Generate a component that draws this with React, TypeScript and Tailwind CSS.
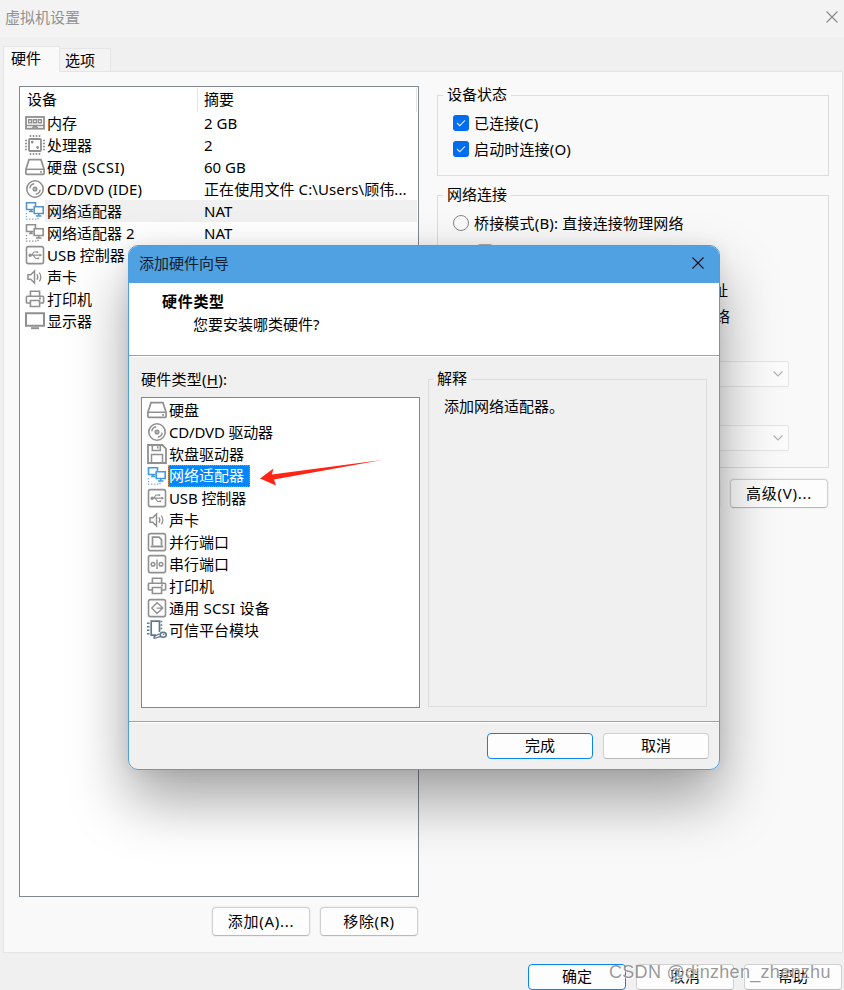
import React from "react";

const G = "#909090";

function Icon({ name }: { name: string }) {
  const blue = name === "netblue";
  const bright = name === "netbright";
  const netColor = blue ? "#5a93c0" : bright ? "#3d9bea" : G;
  return (
    <svg width="20" height="20" viewBox="0 0 20 20" fill="none" stroke={G} strokeWidth="1.4" className="block shrink-0">
      {name === "memory" && (
        <>
          <rect x="1" y="4" width="18" height="11.700" strokeWidth="1.8" />
          <path d="M1 12.500h18M7 15.500l1.500-1.500h3l1.500 1.500" />
          <path d="M3.600 6.700h3v3h-3zM8.500 6.700h3v3h-3zM13.400 6.700h3v3h-3z" strokeWidth="1.4" />
        </>
      )}
      {name === "cpu" && (
        <>
          <rect x="4" y="4" width="12" height="12" rx="1" strokeWidth="1.8" />
          <path d="M5.500 0v2M8.500 0v2M11.500 0v2M14.500 0v2M5.500 18v2M8.500 18v2M11.500 18v2M14.500 18v2M0 5.500h2M0 8.500h2M0 11.500h2M0 14.500h2M18 5.500h2M18 8.500h2M18 11.500h2M18 14.500h2" strokeWidth="1.500" />
          <circle cx="7.200" cy="7.200" r=".7" />
          <circle cx="12.600" cy="12.500" r=".7" />
        </>
      )}
      {name === "disk" && (
        <>
          <path d="M4 2.700h12l3.100 9.600v4.200c0 .6-.4.9-.9.9H1.800c-.5 0-.9-.3-.9-.9v-4.200z" strokeWidth="1.700" />
          <path d="M1 12.300h18" strokeWidth="1.500" />
          <path d="M15 14.900h2" strokeWidth="1.500" />
        </>
      )}
      {name === "cd" && (
        <>
          <circle cx="10" cy="10" r="8.200" strokeWidth="1.600" />
          <circle cx="10" cy="10" r="1.600" strokeWidth="1.900" />
          <path d="M4.800 9.300c.3-2.400 2-4.100 4.400-4.500M15.200 10.700c-.3 2.400-2 4.100-4.400 4.500" />
        </>
      )}
      {(name === "net" || blue || bright) && (
        <>
          <g stroke={netColor}>
            <path d="M10.500 5V1.700h-9v6.800h7M4 10.500h4M6 8.500v2" strokeWidth="1.600" />
            <path d="M9.200 5.700h9v6.800h-9zM13.700 12.500v2M11 15h5.500" strokeWidth="1.600" />
          </g>
          <path d="M1.500 12v1.200M1.500 15v1.200M1 18.200h1.400M4 18.200h1.400M7 18.200h1.400M10 18.200h1.400M13 16.700v1.500" stroke={blue || bright ? "#84aaca" : G} strokeWidth="1.300" />
        </>
      )}
      {name === "usb" && (
        <>
          <rect x="1.500" y="1.600" width="17" height="17" rx="1.800" strokeWidth="1.600" />
          <path d="M4.500 10.200h11.300M6.800 10l2.200-3h2.800M8.400 10.500l2.300 3h2.400" strokeWidth="1.200" />
          <circle cx="5.200" cy="10.200" r="1" fill={G} />
          <path d="M11.500 6.200h1.700v1.700h-1.700zM12.500 12.600h1.700v1.700h-1.700zM14.400 8.600l2.600 1.600-2.600 1.600z" fill={G} stroke="none" />
        </>
      )}
      {name === "sound" && (
        <>
          <path d="M3 7.700h2.700l3.800-3.700v12l-3.800-3.700H3z" strokeWidth="1.500" />
          <path d="M11.800 7.300c1.200 1.500 1.200 3.900 0 5.400M14.200 5.600c2.200 2.500 2.200 6.300 0 8.800" strokeWidth="1.300" />
        </>
      )}
      {name === "printer" && (
        <path d="M5.400 7V2.200h9.200V7M5.400 14H2.200c-.5 0-.8-.3-.8-.8V8c0-.5.3-.8.8-.8h15.600c.5 0 .8.3.8.8v5.200c0 .5-.3.8-.8.8h-3.200M5.400 11.500h9.200v6H5.400zM14 9.400h2" strokeWidth="1.600" />
      )}
      {name === "display" && (
        <>
          <path d="M1 2.300h18v12.500H1z" strokeWidth="2" />
          <path d="M6 17.200h8" strokeWidth="2" />
        </>
      )}
      {name === "floppy" && (
        <>
          <path d="M1 1h14.300l3.700 3.700V19H1z" strokeWidth="1.800" />
          <path d="M5.300 1v5.400h8V1M4.500 19v-8.400h11V19M10.800 2.300v2.200" strokeWidth="1.500" />
        </>
      )}
      {name === "parallel" && (
        <>
          <rect x="1.500" y="1.600" width="17" height="17" rx="1.800" strokeWidth="1.600" />
          <path d="M5.500 13.500V5.200h6.500l2.500 2.300v6" strokeWidth="1.700" />
          <path d="M3.700 14.500h12.600" strokeWidth="2.200" />
        </>
      )}
      {name === "serial" && (
        <>
          <rect x="1.500" y="1.600" width="17" height="17" rx="1.800" strokeWidth="1.600" />
          <circle cx="6" cy="10.200" r="1.800" strokeWidth="1.500" />
          <circle cx="14" cy="10.200" r="1.800" strokeWidth="1.500" />
          <path d="M10 5.500v9.400" />
        </>
      )}
      {name === "scsi" && (
        <>
          <rect x="1.500" y="1.600" width="17" height="17" rx="1.800" strokeWidth="1.600" />
          <path d="M13.200 7.500 10 4.700l-5.200 5.400 5.200 5.400 3.200-3M9.500 10.100h6.200M13.200 7.600l2.500 2.500-2.500 2.500" />
        </>
      )}
      {name === "tpm" && (
        <g stroke="#60778e">
          <path d="M9 15.200H4.200V1.200h8.300V12" strokeWidth="1.700" />
          <path d="M0 3.200h2.500M0 6.700h2.500M0 10.200h2.500M0 13.700h2.500M13.500 1.600h1.800M13.500 5h1.800M13.500 8.500h1.800" strokeWidth="1.500" />
          <ellipse cx="16.200" cy="14.800" rx="3" ry="2.500" strokeWidth="1.600" />
          <path d="m14 16.300-7 2.200M12.500 13.700l-5.500 3M7 16.500v2.200" strokeWidth="1.300" />
          <path d="M15.800 14.200h1.400" strokeWidth="1.400" />
        </g>
      )}
    </svg>
  );
}

const devices = [
  ["memory", "内存", "2 GB", ""],
  ["cpu", "处理器", "2", ""],
  ["disk", "硬盘 (SCSI)", "60 GB", "tracking-[0.45px]"],
  ["cd", "CD/DVD (IDE)", "正在使用文件 C:\\Users\\顾伟...", "tracking-[0.08px]"],
  ["netblue", "网络适配器", "NAT", ""],
  ["net", "网络适配器 2", "NAT", ""],
  ["usb", "USB 控制器", "", ""],
  ["sound", "声卡", "", ""],
  ["printer", "打印机", "", ""],
  ["display", "显示器", "", ""],
];

const hardware = [
  ["disk", "硬盘", ""],
  ["cd", "CD/DVD 驱动器", "tracking-[-0.18px]"],
  ["floppy", "软盘驱动器", ""],
  ["netbright", "网络适配器", ""],
  ["usb", "USB 控制器", "tracking-[-0.1px]"],
  ["sound", "声卡", ""],
  ["parallel", "并行端口", ""],
  ["serial", "串行端口", ""],
  ["printer", "打印机", ""],
  ["scsi", "通用 SCSI 设备", "tracking-[0.2px]"],
  ["tpm", "可信平台模块", ""],
];

function Button({ children, className = "", primary = false }: { children: React.ReactNode; className?: string; primary?: boolean }) {
  return (
    <button
      className={`flex shrink-0 items-center justify-center rounded-[4px] border bg-[#fdfdfd] pb-[2px] ${
        primary ? "border-[#0a84f0]" : "border-[#d0d0d0] border-b-[#b9b9b9]"
      } ${className}`}
    >
      {children}
    </button>
  );
}

function Cross({ size, color }: { size: number; color: string }) {
  return (
    <svg width={size} height={size} viewBox="0 0 12 12" stroke={color} strokeWidth="1.1" className="block">
      <path d="M.5.5l11 11M11.5.5l-11 11" />
    </svg>
  );
}

function Check({ label }: { label: string }) {
  return (
    <div className="flex h-[26px] items-center tracking-[0.15px]">
      <span className="mr-[5px] flex size-4 items-center justify-center rounded-[3px] bg-[#006cf0]">
        <svg width="10" height="10" viewBox="0 0 10 10" fill="none" stroke="#d9e9ff" strokeWidth="1.1">
          <path d="M1 5l2.8 2.7L9 2.4" />
        </svg>
      </span>
      {label}
    </div>
  );
}

function Radio({ label }: { label: string }) {
  return (
    <div className="flex h-[26px] items-center whitespace-nowrap tracking-[0.18px]">
      <span className="mr-[5px] size-4 rounded-full border border-[#868686] bg-[#fafafa]" />
      {label}
    </div>
  );
}

function Combo() {
  return (
    <div className="flex h-[26px] w-[290px] items-center justify-end rounded-[2px] border border-[#e5e5e5] bg-[#fbfbfb] pr-[5px]">
      <svg width="10" height="6" viewBox="0 0 10 6" fill="none" stroke="#b0b0b0" strokeWidth="1.1">
        <path d="M.5.5L5 5 9.5.5" />
      </svg>
    </div>
  );
}

function Wizard() {
  return (
    <div className="absolute left-[128px] top-[245px] flex h-[525px] w-[592px] flex-col overflow-hidden rounded-[10px] border border-[#4f9fdf] bg-[#f0f0f0]">
      <header className="flex h-[37px] shrink-0 items-center justify-between bg-[#50a1e2] pb-[3px] pl-[10px] pr-[15px] text-[#10202e]">
        <span>添加硬件向导</span>
        <Cross size={12} color="#111" />
      </header>
      <div className="h-[73px] shrink-0 border-b border-[#a0a0a0] bg-white pt-[7px]">
        <div className="h-[23px] pl-[33px] font-bold leading-[23px] tracking-[0.7px]">硬件类型</div>
        <div className="h-[23px] pl-[64px] leading-[23px]">您要安装哪类硬件?</div>
      </div>
      <div className="flex h-[365px] shrink-0 border-t border-white pl-[12px]">
        <div className="w-[279px] pt-[11px]">
          <div className="h-[23px] leading-[22px] tracking-[0.25px]">
            硬件类型(<span className="underline underline-offset-2">H</span>):
          </div>
          <div className="mt-[6px] h-[311px] border border-[#828790] bg-white pl-[5px] pt-[1px]">
            {hardware.map(([icon, label, tracking]) => (
              <div key={label} className="flex h-[22px] items-center">
                <Icon name={icon} />
                {icon === "netbright" ? (
                  <span className="ml-px h-[22px] w-[82px] border border-dotted border-[#e08a45] bg-[#0087ff] leading-[19px] text-white">
                    {label}
                  </span>
                ) : (
                  <span className={`ml-[2px] leading-[22px] ${tracking}`}>{label}</span>
                )}
              </div>
            ))}
          </div>
        </div>
        <fieldset className="ml-[8px] mt-[11px] h-[339px] w-[279px] border border-[#dcdcdc]">
          <legend className="ml-[4px] h-[22px] px-[4px] leading-[21px]">解释</legend>
          <div className="pl-[15px] pt-[5px] leading-[22px]">添加网络适配器。</div>
        </fieldset>
      </div>
      <div className="flex h-[48px] shrink-0 items-start justify-end gap-[10px] border-t border-[#a0a0a0] pr-[10px] pt-[11px] shadow-[inset_0_1px_0_#fff]">
        <Button primary className="h-[26px] w-[106px]">完成</Button>
        <Button className="h-[26px] w-[106px]">取消</Button>
      </div>
    </div>
  );
}

export default function App() {
  return (
    <div className="relative flex h-[990px] w-[844px] flex-col overflow-hidden bg-[#f0f0f0] font-['Noto_Sans','Noto_Sans_CJK_SC',sans-serif] text-[15px] leading-[22px] text-black">
      <header className="flex h-[37px] shrink-0 items-center justify-between bg-[#f3f3f3] pb-[3px] pl-[5px] pr-[6px] text-[#929292]">
        <span>虚拟机设置</span>
        <Cross size={12} color="#888" />
      </header>
      <div className="flex h-[34px] shrink-0 items-end pl-[3px]">
        <div className="z-10 -mb-px h-[26px] w-[57px] border border-b-0 border-[#e5e5e5] bg-[#f9f9f9] pl-[7px] leading-[22px]">硬件</div>
        <div className="h-[23px] w-[51px] border border-b-0 border-l-0 border-[#e5e5e5] bg-[#f3f3f3] pl-[5px] leading-[22px]">选项</div>
      </div>
      <main className="ml-[3px] flex h-[882px] w-[840px] shrink-0 border border-[#e5e5e5] bg-[#f9f9f9] pl-[15px]">
        <section className="w-[400px] shrink-0 pt-[14px]">
          <div className="h-[811px] border border-[#828790] bg-white">
            <div className="flex h-[25px] pt-px">
              <div className="w-[178px] border-r border-[#e5e5e5] pl-[7px] leading-[23px]">设备</div>
              <div className="w-[219px] border-r border-[#e5e5e5] pl-[6px] leading-[23px]">摘要</div>
            </div>
            {devices.map(([icon, name, summary, tracking]) => (
              <div key={name} className="flex h-[22px] items-center whitespace-pre pl-[5px]">
                <Icon name={icon} />
                <div className={`flex h-[22px] w-[372px] items-center pl-[2px] ${icon === "netblue" ? "bg-[#f0f0f0]" : ""}`}>
                  <span className={`w-[157px] ${tracking}`}>{name}</span>
                  <span className={icon === "cd" ? "tracking-[0.1px]" : ""}>{summary}</span>
                </div>
              </div>
            ))}
          </div>
          <div className="mt-[10px] flex justify-end gap-[10px] pr-px">
            <Button className="h-[29px] w-[98px] tracking-[0.75px] shadow-[0_0_0_1px_#f0f0f0]">添加(A)...</Button>
            <Button className="h-[29px] w-[98px] tracking-[0.6px] shadow-[0_0_0_1px_#f0f0f0]">移除(R)</Button>
          </div>
        </section>
        <section className="ml-[18px] w-[392px] shrink-0 pt-[12px]">
          <fieldset className="h-[92px] border border-[#dcdcdc]">
            <legend className="ml-[5px] h-[22px] px-[4px] leading-[21px]">设备状态</legend>
            <div className="pl-[15px] pt-[4px]">
              <Check label="已连接(C)" />
              <Check label="启动时连接(O)" />
            </div>
          </fieldset>
          <fieldset className="mt-[8px] h-[284px] border border-[#dcdcdc]">
            <legend className="ml-[5px] h-[22px] px-[4px] leading-[21px]">网络连接</legend>
            <div className="pl-[15px] pt-[4px]">
              <Radio label="桥接模式(B): 直接连接物理网络" />
              <div className="flex h-[41px] items-start pl-[24px] pt-[8px]">
                <span className="mr-[5px] size-4 rounded-[3px] border border-[#aaa]" />
                复制物理网络连接状态(P)
              </div>
              <div className="flex h-[26px] w-[275px] items-center justify-between whitespace-nowrap">
                <span className="size-4 rounded-full border border-[#868686]" />
                NAT 模式(N): 用于共享主机的 IP 地址
              </div>
              <div className="flex h-[26px] w-[277px] items-center justify-between whitespace-nowrap">
                <span className="size-4 rounded-full border border-[#868686]" />
                仅主机模式(H): 与主机共享的专用网络
              </div>
              <div className="pl-[46px] pt-[32px]"><Combo /></div>
              <div className="pl-[46px] pt-[38px]"><Combo /></div>
            </div>
          </fieldset>
          <div className="mt-[11px] flex justify-end gap-[10px] pr-px">
            <Button className="h-[29px] w-[98px] shadow-[0_0_0_1px_#f0f0f0]">LAN 区段(S)...</Button>
            <Button className="h-[29px] w-[98px] tracking-[0.75px] shadow-[0_0_0_1px_#f0f0f0]">高级(V)...</Button>
          </div>
        </section>
      </main>
      <footer className="flex justify-end gap-[10px] pr-[2px] pt-[11px]">
        <Button primary className="h-[26px] w-[98px] pb-0">确定</Button>
        <Button className="h-[26px] w-[98px] pb-0">取消</Button>
        <Button className="h-[26px] w-[98px] pb-0">帮助</Button>
      </footer>

      <div className="absolute left-[128px] top-[245px] h-[525px] w-[592px] rounded-[10px] shadow-[0_30px_58px_rgba(0,0,0,0.36),0_0_16px_rgba(0,0,0,0.08)]" />
      <Wizard />
      <svg className="absolute left-[259px] top-[458px]" width="126" height="30" viewBox="0 0 126 30">
        <path d="M1 20.500L14.500 10.500L12.800 16.500L123 2L15 21.500L17 27.500Z" fill="#ff2415" />
      </svg>
      <div className="absolute left-[609px] top-[960px] whitespace-nowrap font-['Liberation_Sans',sans-serif] text-[18px] leading-[24px] tracking-[0.3px] text-[#777]/75 [text-shadow:1px_1px_1px_#fff]">
        CSDN @dinzhen_zhenzhu
      </div>
    </div>
  );
}
